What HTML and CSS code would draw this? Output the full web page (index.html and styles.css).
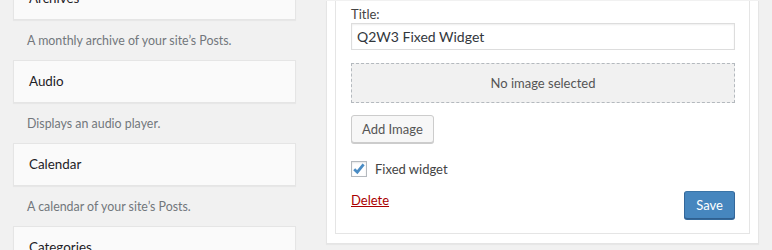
FILE: index.html
```html
<!DOCTYPE html>
<html lang="en">
<head>
<meta charset="utf-8">
<title>Widgets</title>
<link rel="stylesheet" href="styles.css">
</head>
<body>
<div class="page">
  <div class="widget-list">
    <div class="widget">
      <div class="widget-top"><h3 class="widget-title">Archives</h3></div>
      <p class="widget-desc">A monthly archive of your site’s Posts.</p>
    </div>
    <div class="widget">
      <div class="widget-top"><h3 class="widget-title">Audio</h3></div>
      <p class="widget-desc">Displays an audio player.</p>
    </div>
    <div class="widget">
      <div class="widget-top"><h3 class="widget-title">Calendar</h3></div>
      <p class="widget-desc">A calendar of your site’s Posts.</p>
    </div>
    <div class="widget">
      <div class="widget-top"><h3 class="widget-title">Categories</h3></div>
    </div>
  </div>

  <div class="sidebar">
    <div class="widget-inside">
      <label class="field-label" for="title">Title:</label>
      <input class="text-input" id="title" type="text" value="Q2W3 Fixed Widget">
      <div class="image-placeholder">No image selected</div>
      <button class="button" type="button">Add Image</button>
      <label class="check-row">
        <span class="checkbox">
          <svg width="16" height="16" viewBox="0 0 16 16" aria-hidden="true">
            <path d="M3.2 8.2 L6.3 11.2 L12.6 3.4" fill="none" stroke="#4a8cc4" stroke-width="2.8" stroke-linecap="butt" stroke-linejoin="miter"/>
          </svg>
        </span>
        <span class="check-text">Fixed widget</span>
      </label>
      <div class="widget-actions">
        <a class="delete-link" href="#">Delete</a>
        <button class="button button-primary" type="button">Save</button>
      </div>
    </div>
  </div>
</div>
</body>
</html>
```

FILE: styles.css
```css
* {
  box-sizing: border-box;
}

html, body {
  margin: 0;
  padding: 0;
  height: 250px;
  overflow: hidden;
}

body {
  background: #f1f1f1;
  font-family: "Lato", "Open Sans", sans-serif;
  font-size: 13px;
  color: #444;
}

.page {
  display: flex;
  align-items: flex-end;
  padding-left: 13px;
  height: 250px;
}

.widget-list {
  width: 283px;
  flex: none;
  align-self: flex-start;
  margin-top: -23px;
}

.widget-top {
  height: 43px;
  background: #fafafa;
  border: 1px solid #e5e5e5;
  box-shadow: 0 1px 1px rgba(0, 0, 0, 0.04);
  display: flex;
  align-items: center;
  padding: 0 15px;
}

.widget-title {
  margin: 0;
  font-size: 13.4px;
  font-weight: 400;
  color: #1d2126;
  line-height: 1;
}

.widget-desc {
  margin: 0;
  height: 40px;
  padding: 12px 14px 0;
  line-height: 18px;
  font-size: 12.4px;
  color: #72777c;
}

.sidebar {
  flex: none;
  margin-left: 30px;
  width: 433px;
  margin-bottom: 6px;
  background: #fff;
  border: 1px solid #e5e5e5;
  border-top: none;
  box-shadow: 0 1px 1px rgba(0, 0, 0, 0.04);
  padding: 0 8px 9px;
}

.widget-inside {
  border: 1px solid #e5e5e5;
  border-top: none;
  padding: 4px 14px 14px 15px;
  display: flex;
  flex-direction: column;
  align-items: flex-start;
}

.field-label {
  display: block;
  line-height: 18px;
  font-size: 13px;
  color: #444;
}

.text-input {
  width: 100%;
  height: 27px;
  border: 1px solid #ddd;
  box-shadow: inset 0 1px 2px rgba(0, 0, 0, 0.07);
  background: #fff;
  font-family: inherit;
  font-size: 14px;
  color: #32373c;
  padding: 0 5px;
  margin: 0;
  outline: none;
}

.image-placeholder {
  width: 100%;
  height: 40px;
  margin-top: 13px;
  background: #f1f1f1;
  border: 1px dashed #b4b9be;
  display: flex;
  align-items: center;
  justify-content: center;
  font-size: 13px;
  color: #555;
}

.button {
  height: 28px;
  padding: 0 10px;
  margin: 12px 0 0;
  font-family: inherit;
  font-size: 13px;
  line-height: 26px;
  color: #555;
  background: #f7f7f7;
  border: 1px solid #ccc;
  border-radius: 3px;
  box-shadow: 0 1px 0 #ccc;
  cursor: pointer;
}

.check-row {
  display: flex;
  align-items: center;
  margin-top: 18px;
  height: 16px;
}

.checkbox {
  width: 16px;
  height: 16px;
  border: 1px solid #b4b9be;
  background: #fff;
  box-shadow: inset 0 1px 2px rgba(0, 0, 0, 0.1);
  position: relative;
  flex: none;
}

.checkbox svg {
  position: absolute;
  left: -1px;
  top: -1px;
}

.check-text {
  margin-left: 8px;
  color: #444;
  font-size: 13px;
}

.widget-actions {
  width: 100%;
  margin-top: 14px;
  display: flex;
  justify-content: space-between;
  align-items: flex-start;
}

.delete-link {
  color: #a00;
  text-decoration: underline;
  line-height: 18px;
  font-size: 13px;
}

.button-primary {
  margin: 0;
  background: #4686be;
  border-color: #3a74a6 #33679a #2f5f8f;
  box-shadow: 0 1px 0 #35699a;
  color: #fff;
  padding: 0 11px;
}
```
